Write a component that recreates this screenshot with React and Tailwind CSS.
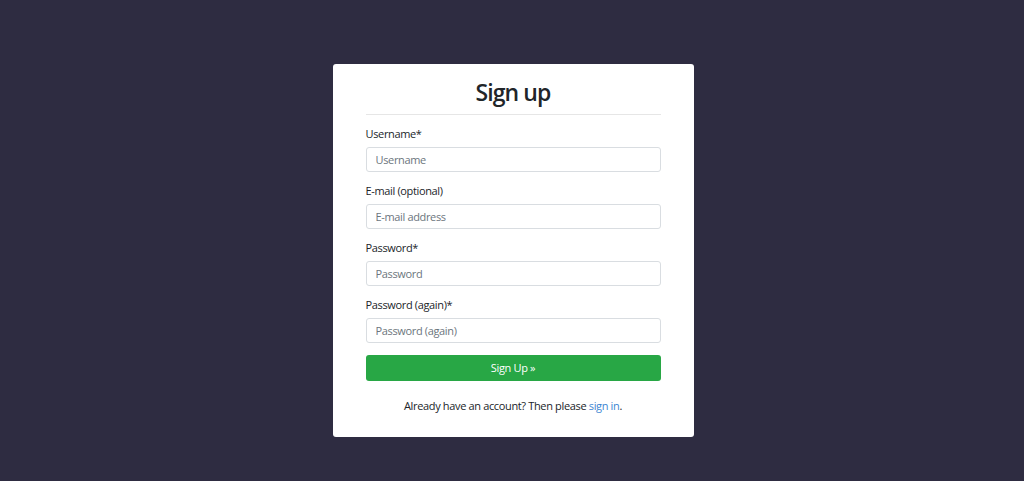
import React from "react";

const fields = [
  { label: "Username*", placeholder: "Username", type: "text" },
  { label: "E-mail (optional)", placeholder: "E-mail address", type: "email" },
  { label: "Password*", placeholder: "Password", type: "password" },
  { label: "Password (again)*", placeholder: "Password (again)", type: "password" },
];

export default function App() {
  return (
    <div
      className="min-h-screen bg-[#2e2c41] pt-[64px] pl-[2px]"
      style={{ fontFamily: '"Open Sans", "Noto Sans", sans-serif' }}
    >
      <div className="mx-auto w-[361px] bg-white rounded-[3px] px-[33px] pt-[12px] pb-[23px] text-[#212529] tracking-[-0.35px]">
        <h1 className="text-center text-[23px] leading-[32px] font-semibold tracking-[-0.9px]">Sign up</h1>
        <div className="mt-[6px] border-t border-[#e6e6e6]" />

        <form className="mt-[11px]">
          {fields.map((f, i) => (
            <div key={f.label} className={i > 0 ? "mt-[11px]" : ""}>
              <label className="block text-[11px] leading-[16px] mb-[5px]">{f.label}</label>
              <input
                type={f.type}
                placeholder={f.placeholder}
                className="block w-full h-[25px] px-[9px] text-[11px] tracking-[-0.35px] border border-[#d9dde1] rounded-[3px] placeholder-[#6c757d] outline-none"
              />
            </div>
          ))}

          <button
            type="button"
            className="mt-[12px] w-full h-[26px] bg-[#28a745] text-white text-[11px] tracking-[-0.35px] rounded-[3px]"
          >
            Sign Up »
          </button>
        </form>

        <p className="mt-[17px] text-center text-[11px] leading-[16px]">
          Already have an account? Then please{" "}
          <a href="#" className="text-[#3d86d2]">sign in</a>.
        </p>
      </div>
    </div>
  );
}
